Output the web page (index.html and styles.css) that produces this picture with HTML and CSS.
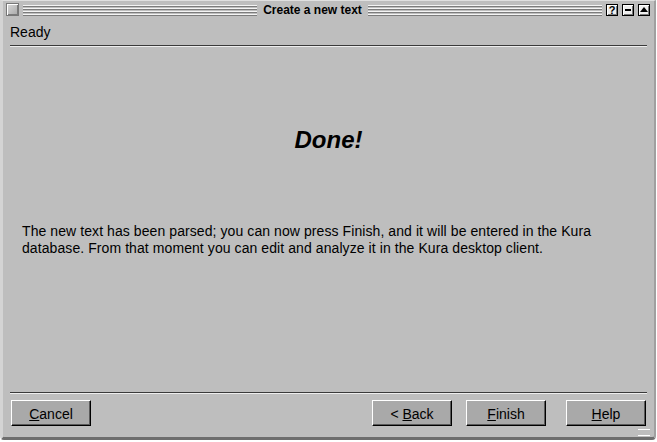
FILE: index.html
```html
<!DOCTYPE html>
<html>
<head>
<meta charset="utf-8">
<link rel="stylesheet" href="styles.css">
</head>
<body>
<div class="window">
  <div class="titlebar">
    <span class="tbtn close"></span>
    <span class="lines"></span>
    <span class="title">Create a new text</span>
    <span class="lines"></span>
    <span class="tbtn q">?</span>
    <span class="tbtn min"><span class="dash"></span></span>
    <span class="tbtn max"><span class="tri"></span></span>
  </div>
  <div class="content">
    <div class="status">Ready</div>
    <div class="sep"></div>
    <div class="main">
      <h1 class="done">Done!</h1>
      <p class="msg">The new text has been parsed; you can now press Finish, and it will be entered in the Kura database. From that moment you can edit and analyze it in the Kura desktop client.</p>
    </div>
    <div class="sep"></div>
    <div class="buttons">
      <button class="btn"><u>C</u>ancel</button>
      <span class="spacer"></span>
      <button class="btn">&lt; <u>B</u>ack</button>
      <button class="btn"><u>F</u>inish</button>
      <button class="btn help"><u>H</u>elp</button>
    </div>
  </div>
  <span class="grip"></span>
</div>
</body>
</html>
```
FILE: styles.css
```css
html, body { margin: 0; padding: 0; background: #ffffff; }
body { width: 657px; height: 442px; overflow: hidden; font-family: "Liberation Sans", Arial, sans-serif; }
.window {
  position: relative;
  width: 651px; height: 436px;
  background: #bebebe;
  border-left: 3px solid #d4d4d4;
  border-top: 1px solid #e0e0e0;
  border-right: 2px solid #a0a0a0;
  border-bottom: 3px solid #6e6e6e;
  border-radius: 0 0 4px 4px;
  display: flex; flex-direction: column;
}
.titlebar {
  height: 17px;
  display: flex; align-items: center;
  padding: 0 4px 0 3px;
  gap: 4px;
}
.tbtn {
  width: 10px; height: 10px;
  border: 1px solid #000;
  box-shadow: inset 1px 1px 0 #fff, inset -1px -1px 0 #7a7a7a;
  background: #c8c8c8;
  display: inline-flex; align-items: center; justify-content: center;
  font: bold 11px "Liberation Sans", Arial, sans-serif;
  color: #000; line-height: 10px;
}
.close { width: 11px; height: 11px; background: linear-gradient(135deg, #d8d8d8, #a8a8a8); border-color: #777; }
.q, .min, .max { background: #eeeeee; }
.dash { width: 6px; height: 2px; background: #000; }
.tri { width: 0; height: 0; border-left: 4px solid transparent; border-right: 4px solid transparent; border-bottom: 5px solid #000; }
.lines {
  flex: 1; height: 11px;
  background: repeating-linear-gradient(to bottom, #f4f4f4 0, #f4f4f4 1px, #7c7c7c 1px, #7c7c7c 2px, #bebebe 2px, #bebebe 3px);
  margin-top: 1px;
}
.title { font: bold 12px "Liberation Sans", Arial, sans-serif; color: #000; padding: 0 2px; }
.content { flex: 1; display: flex; flex-direction: column; padding: 0 7px 0 7px; }
.status { font-size: 14px; padding-top: 6px; height: 21px; color: #000; }
.sep { height: 1px; background: #3a3a3a; border-bottom: 1px solid #eeeeee; }
.main { flex: 1; }
.done { margin: 79px 0 0; text-align: center; font: italic bold 24px "Liberation Sans", Arial, sans-serif; color: #000; }
.msg { margin: 69px 10px 0 12px; font-size: 14px; line-height: 17px; letter-spacing: 0.08px; color: #000; }
.buttons { display: flex; padding: 6px 1px 11px 1px; gap: 14px; height: 26px; }
.spacer { flex: 1; }
.btn {
  width: 80px; height: 26px;
  background: #a9a9a9;
  border: 1px solid #000;
  border-top-color: #ffffff; border-left-color: #ffffff;
  box-shadow: inset -1px -1px 0 #5a5a5a;
  font: 14px "Liberation Sans", Arial, sans-serif; color: #000;
  padding: 2px 0 0;
}
.btn.help { margin-left: 6px; }
.grip {
  position: absolute; right: 4px; bottom: 1px;
  width: 12px; height: 5px;
  border-top: 1px solid #fff; border-bottom: 1px solid #fff;
}
```
